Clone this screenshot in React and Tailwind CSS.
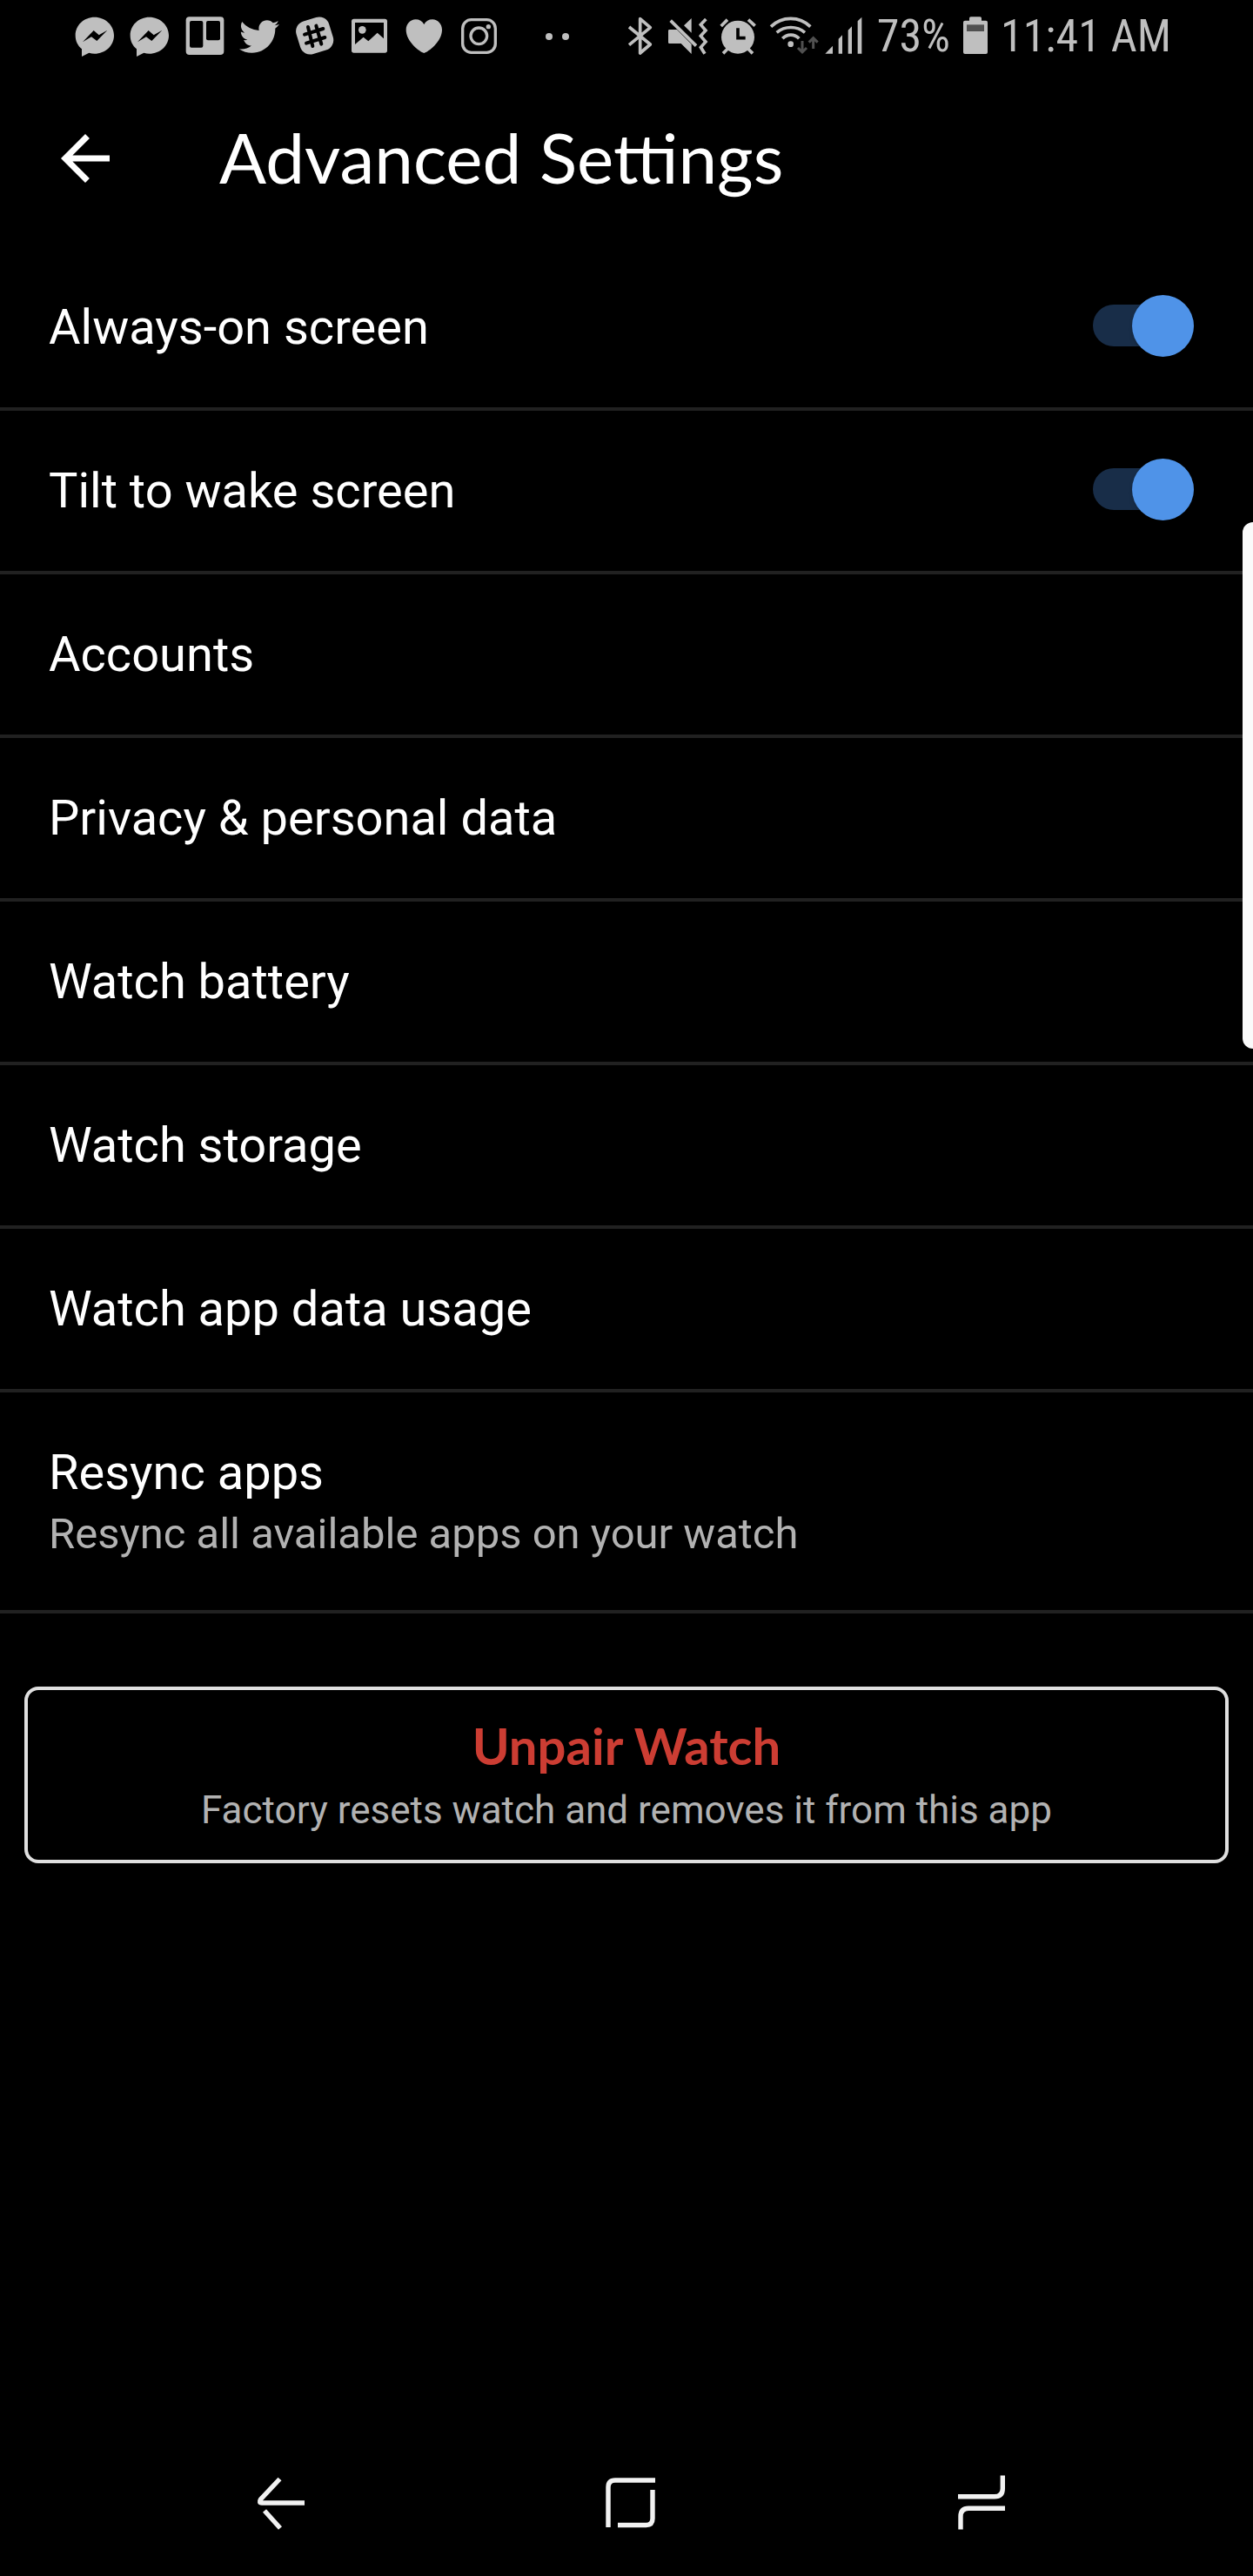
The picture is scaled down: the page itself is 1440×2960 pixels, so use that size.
import { useState } from 'react'
import { FaTwitter } from 'react-icons/fa'
import { MdArrowBack } from 'react-icons/md'

const links = [
  { title: 'Accounts' },
  { title: 'Privacy & personal data' },
  { title: 'Watch battery' },
  { title: 'Watch storage' },
  { title: 'Watch app data usage' },
  { title: 'Resync apps', subtitle: 'Resync all available apps on your watch' },
]

function MessengerIcon() {
  return (
    <svg viewBox="0 0 144 144" className="size-12" fill="currentColor" aria-hidden="true">
      <path
        fillRule="evenodd"
        d="M71 5C34 5 5 33 5 68c0 19 8 35 22 47v26l25-13c6 2 13 3 19 3 37 0 67-28 67-63S108 5 71 5zM30 91l38-40 18 16 29-17-36 37-19-14z"
      />
    </svg>
  )
}

function TrelloIcon() {
  return (
    <svg viewBox="0 0 144 144" className="size-12" aria-hidden="true">
      <rect x="8" y="4" width="131" height="131" rx="12" fill="currentColor" />
      <rect x="21" y="18" width="46" height="92" rx="6" fill="#000" />
      <rect x="78" y="18" width="48" height="67" rx="6" fill="#000" />
    </svg>
  )
}

function SlackIcon() {
  return (
    <svg viewBox="0 0 144 144" className="size-12" aria-hidden="true">
      <rect x="15" y="10" width="118" height="118" rx="36" fill="currentColor" transform="rotate(-17 74 69)" />
      <path d="M51 39l16 66M79 35l18 63M39 65l64-20M45 95l64-20" stroke="#000" strokeWidth="12" strokeLinecap="round" />
    </svg>
  )
}

function PictureIcon() {
  return (
    <svg viewBox="0 0 144 144" className="size-12" aria-hidden="true">
      <rect x="12" y="11" width="123" height="117" rx="8" fill="currentColor" />
      <path d="M24 24h99v55l-22-20-31 29-17-14-29 25z" fill="#000" />
      <circle cx="49" cy="49" r="13" fill="currentColor" />
    </svg>
  )
}

function HeartIcon() {
  return (
    <svg viewBox="0 0 144 144" className="size-12" fill="currentColor" aria-hidden="true">
      <path d="M73 129C58 125 11 90 11 49c0-21 15-36 33-36 13 0 23 6 29 17 6-11 16-17 29-17 18 0 33 15 33 36 0 41-47 76-62 80z" />
    </svg>
  )
}

function InstagramIcon() {
  return (
    <svg viewBox="0 0 144 144" className="size-12" fill="none" stroke="currentColor" strokeWidth="10" aria-hidden="true">
      <rect x="17" y="14" width="113" height="113" rx="30" />
      <circle cx="73" cy="70" r="28" />
      <circle cx="106" cy="38" r="8" fill="currentColor" stroke="none" />
    </svg>
  )
}

function BluetoothIcon() {
  return (
    <svg viewBox="0 0 102 144" className="h-12 w-[34px]" fill="none" stroke="currentColor" strokeWidth="11" strokeLinejoin="round" aria-hidden="true">
      <path d="M9 39l73 60-35 30V11l35 30-73 60" />
    </svg>
  )
}

function MuteIcon() {
  return (
    <svg viewBox="0 0 144 144" className="size-12" aria-hidden="true">
      <path d="M10 48h26l50 50v34L50 96H10q-4 0-4-4V52q0-4 4-4zM60 34L86 9v50z" fill="currentColor" />
      <path d="M14 17l88 87M136 12l-18 19 17 20-17 19 17 20-17 19 14 22" fill="none" stroke="currentColor" strokeWidth="11" />
    </svg>
  )
}

function AlarmIcon() {
  return (
    <svg viewBox="0 0 138 144" className="h-12 w-[46px]" fill="none" stroke="currentColor" strokeWidth="11" aria-hidden="true">
      <circle cx="66" cy="74" r="57" fill="currentColor" stroke="none" />
      <path d="M8 36l22-22M102 14l23 21M15 130l16-16M117 130l-16-16" />
      <path d="M66 43v34h26" stroke="#000" />
    </svg>
  )
}

function WifiIcon() {
  return (
    <svg viewBox="0 0 177 144" className="h-12 w-[59px]" fill="none" stroke="currentColor" strokeWidth="11" aria-hidden="true">
      <circle cx="74" cy="98" r="10" fill="currentColor" stroke="none" />
      <path d="M6 38a97 97 0 0 1 136 0M26 58a76 76 0 0 1 97 0M46 79a38 38 0 0 1 57 0" />
      <path d="M114 87v38M99 111l15 15 15-15M152 114V77M137 92l15-15 15 15" stroke="#505050" strokeWidth="9" />
    </svg>
  )
}

function SignalIcon() {
  return (
    <svg viewBox="0 0 135 144" className="h-12 w-[45px]" fill="currentColor" aria-hidden="true">
      <path d="M4 131l26-27v27zM50 131V80l13-13v64zM83 131V50l13-13v94zM116 131V19l14-14v126z" />
    </svg>
  )
}

function BatteryIcon() {
  return (
    <svg viewBox="0 0 90 144" className="h-12 w-[30px]" fill="currentColor" aria-hidden="true">
      <rect x="3" y="17" width="84" height="115" rx="6" />
      <rect x="24" y="4" width="42" height="20" rx="5" />
      <rect x="15" y="31" width="60" height="23" fill="#505050" />
    </svg>
  )
}

function StatusBar() {
  return (
    <div className="flex items-center justify-between py-[18px] pl-[85px] pr-[94px] text-[#bfbfbf]">
      <div className="flex items-center gap-[15px]">
        <MessengerIcon />
        <MessengerIcon />
        <TrelloIcon />
        <FaTwitter className="size-12 p-px" aria-hidden="true" />
        <SlackIcon />
        <PictureIcon />
        <HeartIcon />
        <InstagramIcon />
        <div className="flex gap-[11px] pl-[38px]">
          <span className="size-2 rounded-full bg-current" />
          <span className="size-2 rounded-full bg-current" />
        </div>
      </div>
      <div className="flex items-center gap-3">
        <BluetoothIcon />
        <MuteIcon />
        <AlarmIcon />
        <div className="flex gap-1">
          <WifiIcon />
          <SignalIcon />
        </div>
        <div className="flex items-center gap-[14px] pl-1 font-['Roboto_Condensed','Roboto',sans-serif] text-[52px] leading-12">
          <span>73%</span>
          <BatteryIcon />
          <span>11:41 AM</span>
        </div>
      </div>
    </div>
  )
}

function ToggleRow({ label }) {
  const [on, setOn] = useState(true)

  return (
    <label className="flex items-center justify-between border-b-4 border-[#212121] py-14 pl-14 pr-[68px]">
      <span className="text-[56px] leading-[72px]">{label}</span>
      <input type="checkbox" role="switch" className="peer sr-only" checked={on} onChange={() => setOn(!on)} />
      <span className="mb-1 flex h-12 w-[116px] items-center rounded-full bg-[#3a3a3a] peer-checked:justify-end peer-checked:bg-[#182d48] *:bg-[#bdbdbd] peer-checked:*:bg-[#4f93e8]">
        <span className="size-[71px] shrink-0 rounded-full shadow-md" />
      </span>
    </label>
  )
}

function LinkRow({ title, subtitle }) {
  return (
    <a href="#" className="flex flex-col gap-1 border-b-4 border-[#212121] px-14 py-14">
      <span className="text-[56px] leading-[72px]">{title}</span>
      {subtitle && <span className="text-[49px] leading-[62px] text-[#b2b2b2]">{subtitle}</span>}
    </a>
  )
}

function NavBar() {
  return (
    <nav className="mt-auto flex justify-between pb-[52px] pl-[292px] pr-[280px] text-[#f2f2f2]">
      <button type="button" aria-label="Back">
        <svg viewBox="0 0 64 64" className="size-16" fill="none" stroke="currentColor" strokeWidth="5.4">
          <path d="M29.5 4.5L7.5 28Q5 32 9 32h49M12 41l18 20" />
        </svg>
      </button>
      <button type="button" aria-label="Home">
        <svg viewBox="0 0 64 64" className="size-16" fill="none" stroke="currentColor" strokeWidth="5.4">
          <path d="M5 60V14q0-8 8-8h46M56 17v33q0 7.5-7.5 7.5H16" />
        </svg>
      </button>
      <button type="button" aria-label="Recent apps">
        <svg viewBox="0 0 64 64" className="size-16" fill="none" stroke="currentColor" strokeWidth="5.4">
          <path d="M5 24.7h42q9.3 0 9.3-9.3V.5M59 38.3H17q-9 0-9 9.3v15" />
        </svg>
      </button>
    </nav>
  )
}

export default function App() {
  return (
    <div className="relative flex min-h-screen flex-col bg-black font-['Roboto',sans-serif] text-white">
      <StatusBar />

      <header className="flex h-[200px] items-center pb-1 pl-14">
        <button type="button" aria-label="Navigate up">
          <MdArrowBack className="size-21" />
        </button>
        <h1 className="pb-1 pl-28 font-['Lato',sans-serif] text-[80px] leading-24">Advanced Settings</h1>
      </header>

      <main>
        <ToggleRow label="Always-on screen" />
        <ToggleRow label="Tilt to wake screen" />
        {links.map((link) => (
          <LinkRow key={link.title} {...link} />
        ))}

        <div className="px-7 pt-[84px]">
          <button type="button" className="flex w-full flex-col items-center gap-[14px] rounded-2xl border-4 border-[#e0e0e0] pt-8 pb-[29px]">
            <span className="font-['Lato',sans-serif] text-[58px] leading-16 font-bold text-[#cc3d33]">Unpair Watch</span>
            <span className="text-[44px] leading-14 text-[#b2b2b2]">Factory resets watch and removes it from this app</span>
          </button>
        </div>
      </main>

      <NavBar />

      {/* Edge panel handle */}
      <div className="absolute top-[600px] right-0 h-[605px] w-3 rounded-l-xl bg-[#fafafa]" />
    </div>
  )
}
